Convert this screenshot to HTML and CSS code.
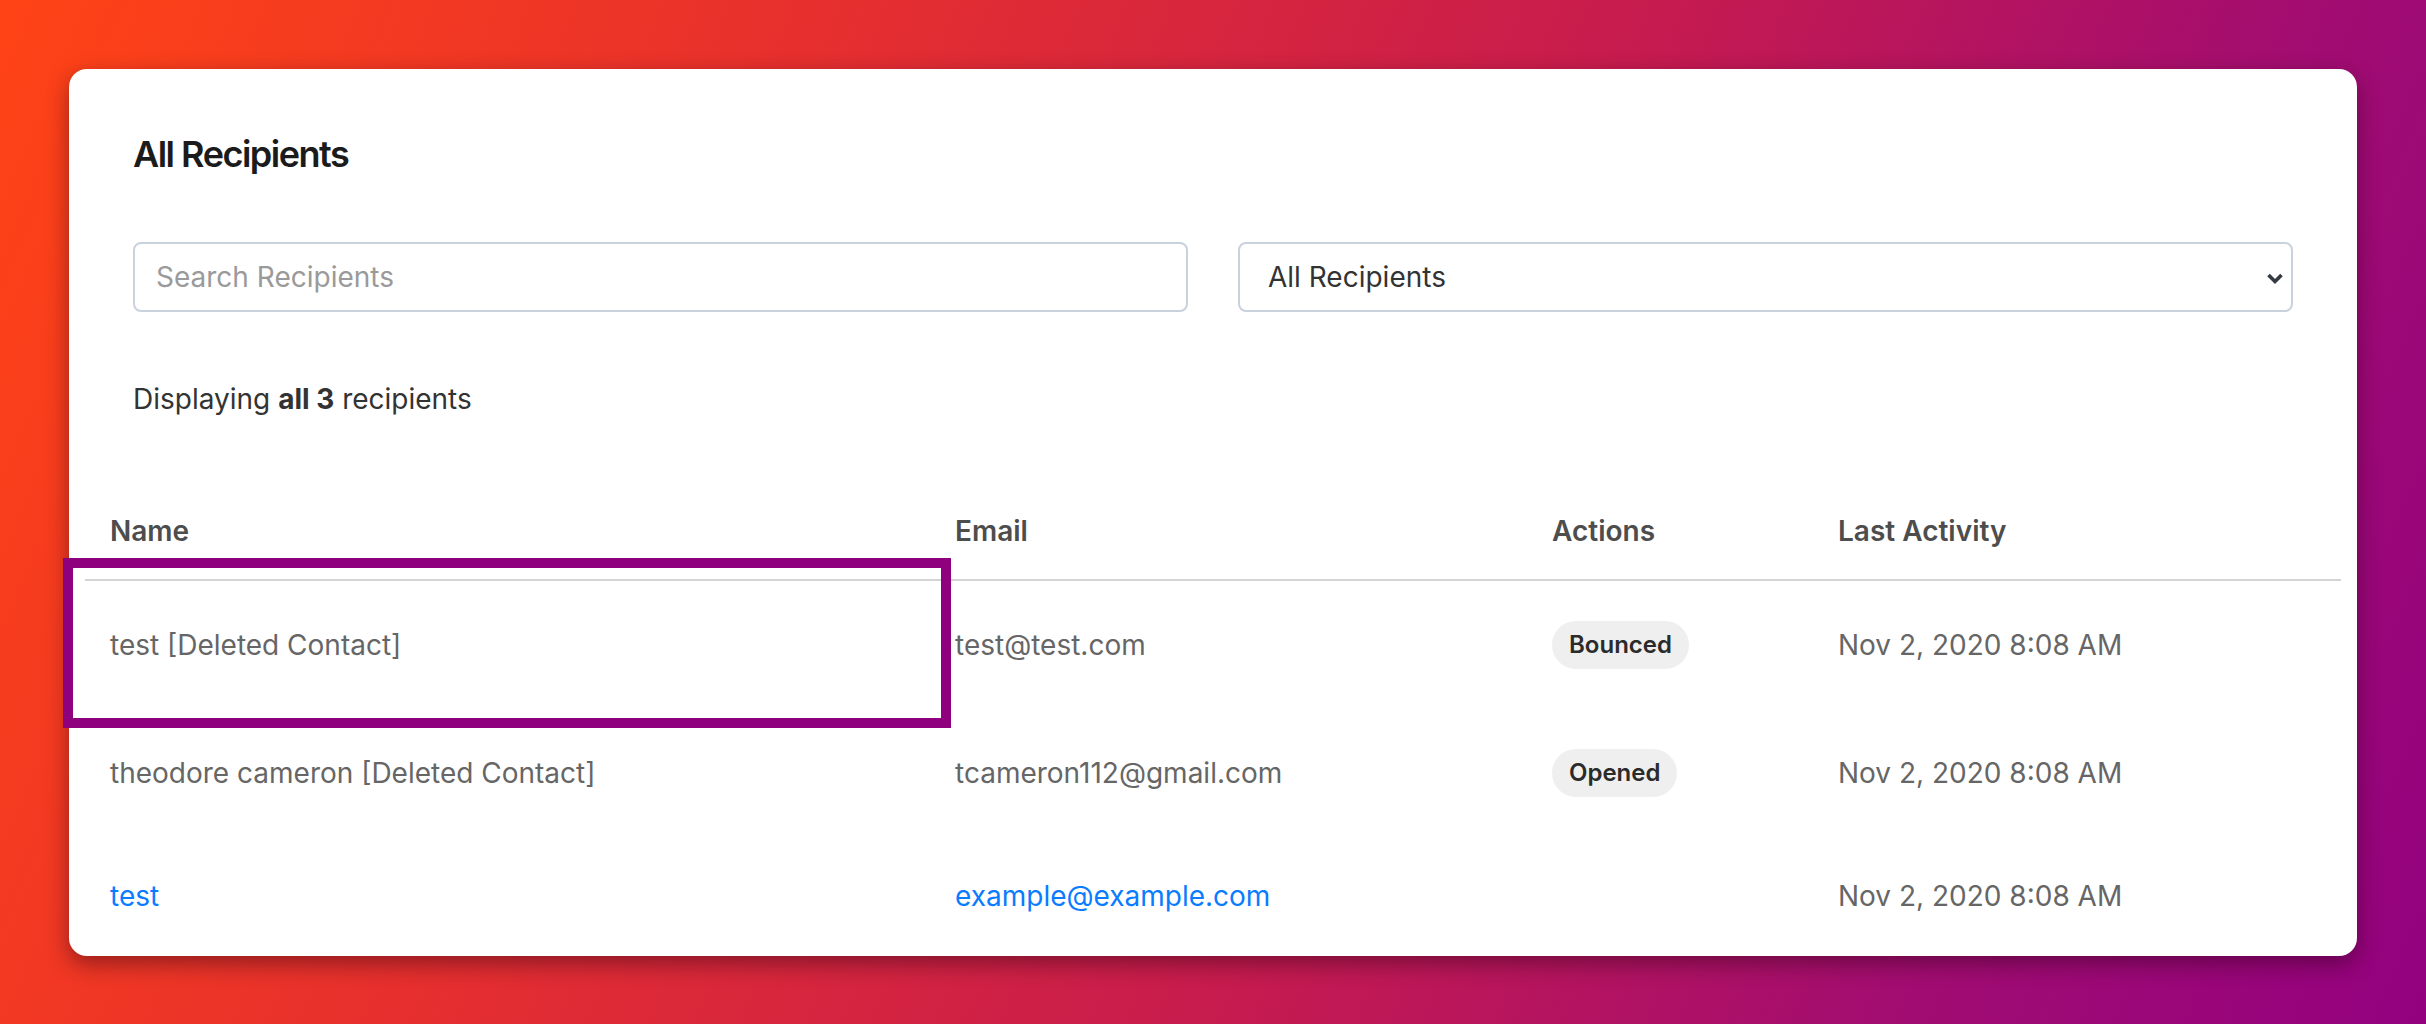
FILE: index.html
```html
<!DOCTYPE html>
<html>
<head>
  <title>All Recipients</title>
  <link rel="stylesheet" href="styles.css">
</head>
<body>
  <div class="card">
    <h1 class="card-title">All Recipients</h1>

    <div class="filters">
      <input type="text" class="search" placeholder="Search Recipients">
      <div class="select-wrap">
        <select class="filter-select">
          <option>All Recipients</option>
          <option>Opened</option>
          <option>Bounced</option>
        </select>
        <svg class="chevron" width="18" height="13" viewBox="0 0 18 13">
          <path d="M2.5 3 L9 9.5 L15.5 3" fill="none" stroke="#343a40" stroke-width="3.6"/>
        </svg>
      </div>
    </div>

    <p class="summary">Displaying <strong>all 3</strong> recipients</p>

    <table class="recipients">
      <colgroup>
        <col class="col-name">
        <col class="col-email">
        <col class="col-actions">
        <col class="col-activity">
      </colgroup>
      <thead>
        <tr>
          <th>Name</th>
          <th>Email</th>
          <th>Actions</th>
          <th>Last Activity</th>
        </tr>
      </thead>
      <tbody>
        <tr>
          <td>test [Deleted Contact]</td>
          <td>test@test.com</td>
          <td><span class="badge">Bounced</span></td>
          <td>Nov 2, 2020 8:08 AM</td>
        </tr>
        <tr>
          <td>theodore cameron [Deleted Contact]</td>
          <td>tcameron112@gmail.com</td>
          <td><span class="badge">Opened</span></td>
          <td>Nov 2, 2020 8:08 AM</td>
        </tr>
        <tr>
          <td><a href="#">test</a></td>
          <td><a href="#">example@example.com</a></td>
          <td></td>
          <td>Nov 2, 2020 8:08 AM</td>
        </tr>
      </tbody>
    </table>

    <div class="highlight"></div>
  </div>
</body>
</html>
```

FILE: styles.css
```css
html, body {
  height: 100%;
}

body {
  margin: 0;
  padding: 69px;
  box-sizing: border-box;
  font-family: Inter, "Noto Sans", Arial, sans-serif;
  font-size: 28px;
  background: linear-gradient(113deg, #ff4316 0%, #e7302d 28%, #c61b4f 58%, #a10c72 82%, #93017f 100%);
}

.card {
  position: relative;
  background-color: #fff;
  border-radius: 18px;
  padding: 64px 64px 0 64px;
  box-shadow: 0 8px 22px rgba(40, 0, 20, 0.45);
}

.card-title {
  margin: 0;
  font-size: 36px;
  line-height: 43px;
  font-weight: 600;
  letter-spacing: -1.5px;
  color: #1b1b1b;
}

.filters {
  display: grid;
  grid-template-columns: 1fr 1fr;
  gap: 50px;
  margin-top: 66px;
}

.select-wrap {
  position: relative;
  min-width: 0;
}

.search,
.filter-select {
  width: 100%;
  min-width: 0;
  height: 70px;
  box-sizing: border-box;
  border: 2px solid #c9d2dc;
  border-radius: 8px;
  font-family: inherit;
  font-size: 28px;
  color: #333;
  background-color: #fff;
  outline: none;
}

.search {
  padding: 0 21px;
}

.search::placeholder {
  color: #9a9a9a;
}

.filter-select {
  appearance: none;
  -webkit-appearance: none;
  padding: 0 60px 0 28px;
}

.chevron {
  position: absolute;
  right: 9px;
  top: 30px;
  pointer-events: none;
}

.summary {
  margin: 66px 0 52px 0;
  line-height: 42px;
  color: #333;
}

.summary strong {
  font-weight: 700;
}

.recipients {
  width: calc(100% + 96px);
  margin: 0 -48px;
  border-collapse: collapse;
  table-layout: fixed;
}

.col-name { width: 845px; }
.col-email { width: 597px; }
.col-actions { width: 286px; }
.col-activity { width: 528px; }

.recipients th {
  text-align: left;
  font-weight: 600;
  color: #4d4d4d;
  line-height: 39px;
  padding: 40px 25px 28px 25px;
  border-bottom: 2px solid #d4d4d4;
}

.recipients td {
  color: #666;
  line-height: 39px;
  padding: 40px 25px;
  vertical-align: middle;
  white-space: nowrap;
}

.recipients a {
  color: #0a7cff;
  text-decoration: none;
}

.badge {
  display: inline-block;
  background-color: #efefef;
  border-radius: 24px;
  padding: 0 17px;
  line-height: 48px;
  font-size: 24px;
  font-weight: 600;
  color: #2b2b2b;
  vertical-align: middle;
}

.highlight {
  position: absolute;
  left: -6px;
  top: 489px;
  width: 888px;
  height: 170px;
  box-sizing: border-box;
  border: 10px solid #8e007d;
  pointer-events: none;
}
```
